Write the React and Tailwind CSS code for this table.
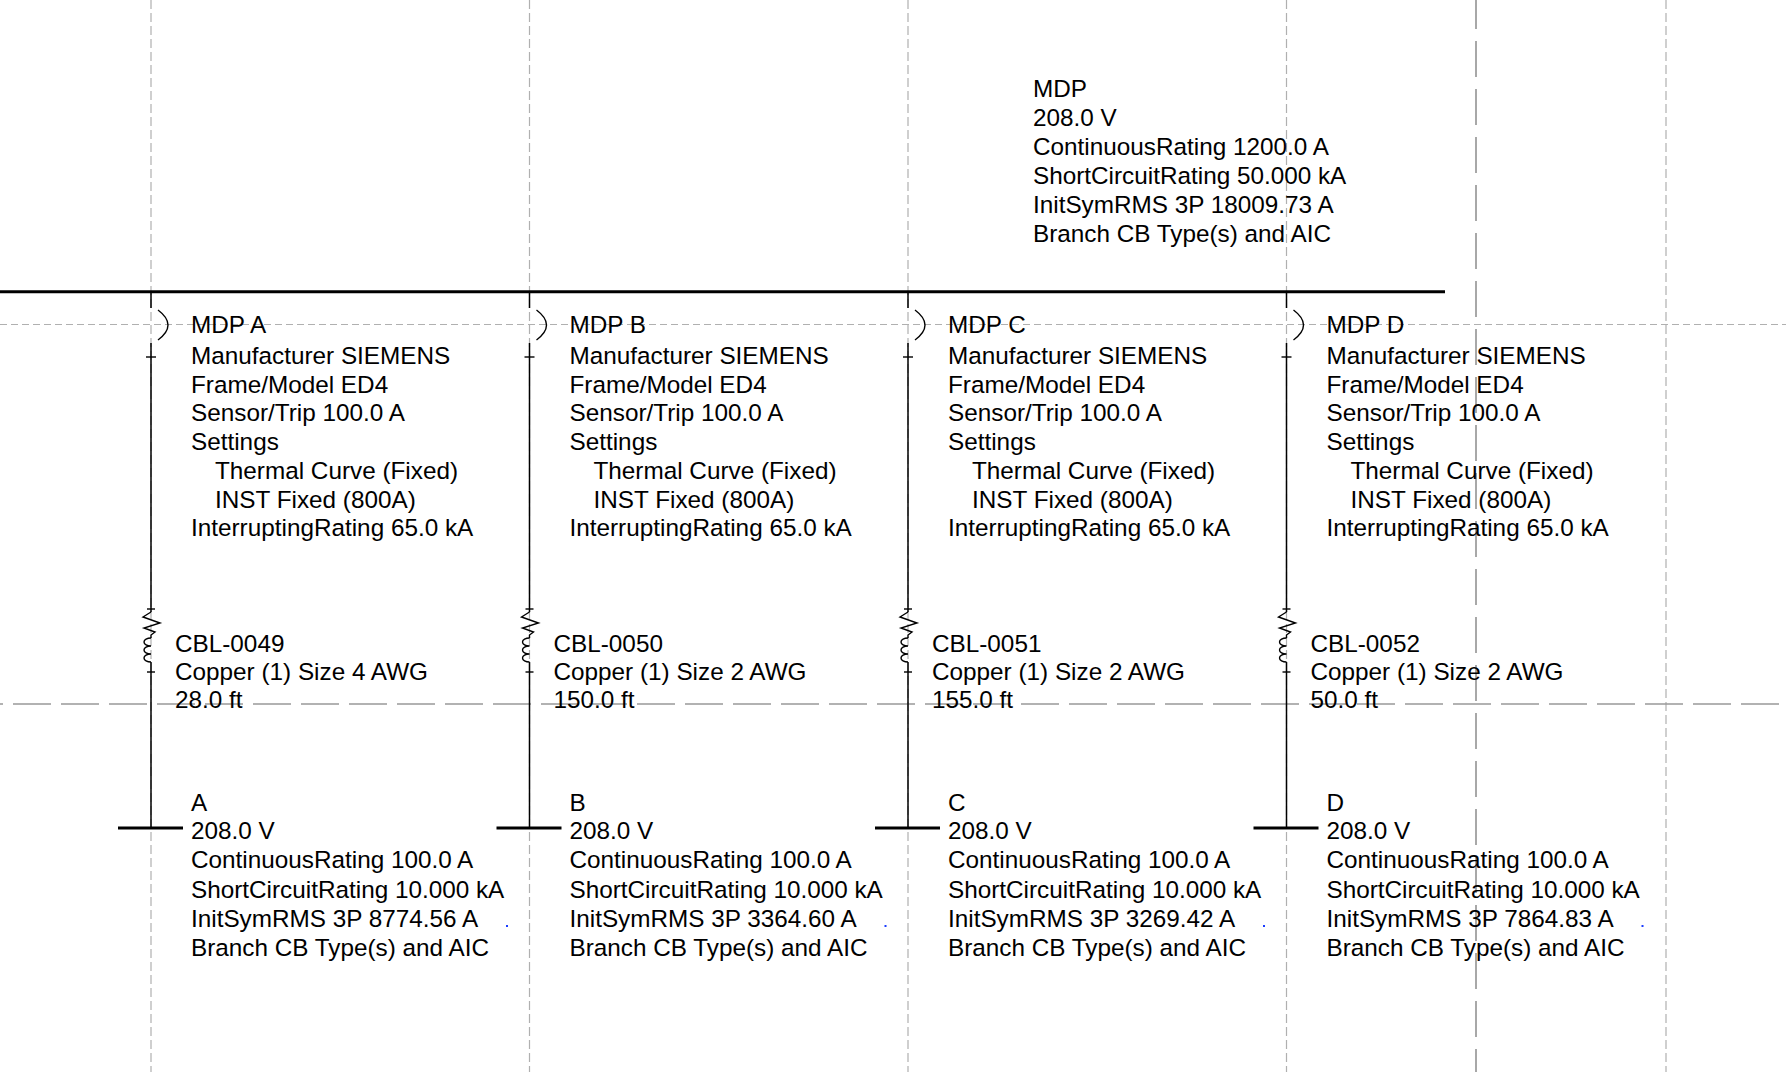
import React from "react";

const cols = [
  { x: 151, brk: "MDP A", cbl: "CBL-0049", size: "4", len: "28.0 ft", bus: "A", isc: "8774.56" },
  { x: 529.5, brk: "MDP B", cbl: "CBL-0050", size: "2", len: "150.0 ft", bus: "B", isc: "3364.60" },
  { x: 908, brk: "MDP C", cbl: "CBL-0051", size: "2", len: "155.0 ft", bus: "C", isc: "3269.42" },
  { x: 1286.5, brk: "MDP D", cbl: "CBL-0052", size: "2", len: "50.0 ft", bus: "D", isc: "7864.83" },
];

function Branch({ x }) {
  // breaker, cable and load bus for one feeder
  return (
    <g transform={`translate(${x} 0)`} stroke="#000" fill="none">
      <path d="M0 292 V308" strokeWidth="1.5" />
      <path d="M7 310 Q27 325 7 340" strokeWidth="1.4" />
      <path d="M0 343 V612" strokeWidth="1.5" />
      <path d="M-5 357 H5" strokeWidth="1.4" />
      <path d="M-4 609 H4" strokeWidth="1.4" />
      <path d="M0 612 L-8 617 L9 623 L-7 628 L4 632 L0 635 V638" strokeWidth="1.4" />
      <path d="M0 638 A7 4 0 0 0 0 646 A7 4 0 0 0 0 654 A7 4 0 0 0 0 662" strokeWidth="1.4" />
      <path d="M0 662 V828" strokeWidth="1.5" />
      <path d="M-4 672 H4" strokeWidth="1.4" />
      <path d="M-33 828 H32" strokeWidth="3" />
    </g>
  );
}

export default function App() {
  const gridX = [151, 529.5, 908, 1286.5, 1666];

  return (
    <div className="relative w-[1786px] h-[1072px] overflow-hidden bg-white text-black font-['Liberation_Sans',Arial,sans-serif] text-[24.3px]">
      <svg className="absolute inset-0" width="1786" height="1072">
        {/* grid */}
        {gridX.map((gx) => (
          <line key={gx} x1={gx} y1="0" x2={gx} y2="1072" stroke="#b0b0b0" strokeWidth="1.2" strokeDasharray="9 4" />
        ))}
        <line x1="0" y1="324.5" x2="1786" y2="324.5" stroke="#b0b0b0" strokeWidth="1.2" strokeDasharray="7 4" />
        <line x1="1476" y1="0" x2="1476" y2="1072" stroke="#8c8c8c" strokeWidth="1.5" strokeDasharray="36 12" strokeDashoffset="7" />
        <line x1="0" y1="704" x2="1786" y2="704" stroke="#999" strokeWidth="1.4" strokeDasharray="38 10" strokeDashoffset="35" />

        {/* main bus */}
        <path d="M0 291.7 H1445" stroke="#000" strokeWidth="3" />
        {cols.map((c) => (
          <Branch key={c.brk} x={c.x} />
        ))}
        {cols.map((c) => (
          <rect key={c.bus} x={c.x + 355} y="925" width="2" height="2" fill="#1a3cff" />
        ))}
      </svg>

      {/* MDP bus data */}
      <div className="absolute left-[1033px] top-[74px] leading-[29px] whitespace-pre">
        <div>MDP</div>
        <div>208.0 V</div>
        <div>ContinuousRating 1200.0 A</div>
        <div>ShortCircuitRating 50.000 kA</div>
        <div>InitSymRMS 3P 18009.73 A</div>
        <div>Branch CB Type(s) and AIC</div>
      </div>

      {cols.map((c) => (
        <React.Fragment key={c.brk}>
          {/* breaker */}
          <div className="absolute top-[310px] whitespace-pre" style={{ left: c.x + 40 }}>
            <div className="leading-[29px] mb-[3px]">{c.brk}</div>
            <div className="leading-[28.7px]">
              <div>Manufacturer SIEMENS</div>
              <div>Frame/Model ED4</div>
              <div>Sensor/Trip 100.0 A</div>
              <div>Settings</div>
              <div className="pl-[24px]">Thermal Curve (Fixed)</div>
              <div className="pl-[24px]">INST Fixed (800A)</div>
              <div>InterruptingRating 65.0 kA</div>
            </div>
          </div>

          {/* cable */}
          <div className="absolute top-[630px] leading-[28px] whitespace-pre" style={{ left: c.x + 24 }}>
            <div>{c.cbl}</div>
            <div>Copper (1) Size {c.size} AWG</div>
            <div>{c.len}</div>
          </div>

          {/* load bus */}
          <div className="absolute top-[790px] whitespace-pre" style={{ left: c.x + 40 }}>
            <div className="leading-[26.2px]">{c.bus}</div>
            <div className="leading-[29.2px]">
              <div>208.0 V</div>
              <div>ContinuousRating 100.0 A</div>
              <div>ShortCircuitRating 10.000 kA</div>
              <div>InitSymRMS 3P {c.isc} A</div>
              <div>Branch CB Type(s) and AIC</div>
            </div>
          </div>
        </React.Fragment>
      ))}
    </div>
  );
}
